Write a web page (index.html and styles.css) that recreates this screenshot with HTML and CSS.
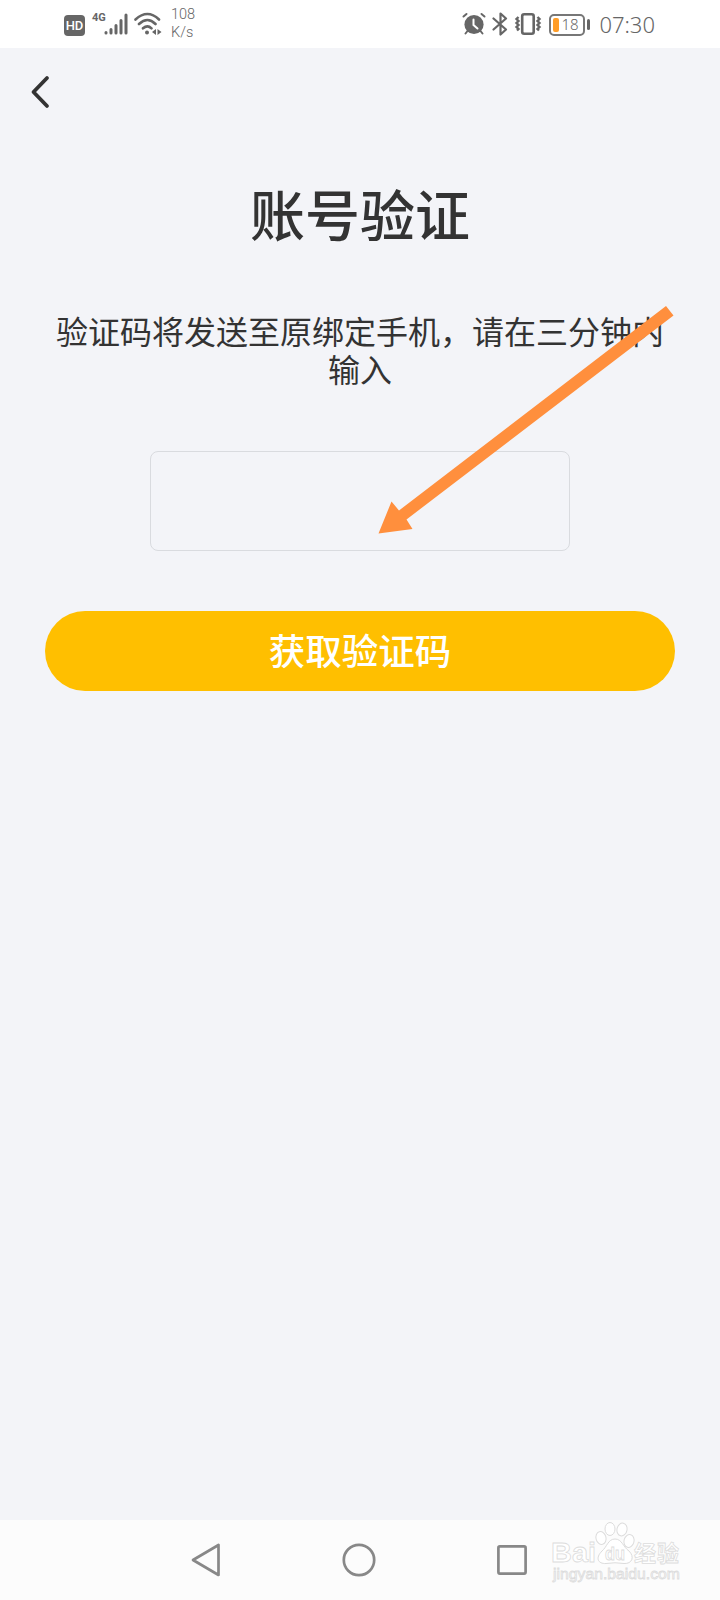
FILE: index.html
```html
<!DOCTYPE html>
<html lang="zh-CN">
<head>
  <meta charset="UTF-8">
  <title>账号验证</title>
  <link rel="stylesheet" href="styles.css">
</head>
<body>
  <div class="status">
    <div class="status-left">
      <span class="hd">HD</span>
      <span class="net">4G</span>
      <svg class="signal" width="24" height="24" viewBox="0 0 24 24" fill="none" stroke="#666" stroke-width="3" stroke-linecap="round">
        <path d="M2 20.5v.5M7 17.5v3.5M12 13.5v7.5M17 8.5v12.5M22 3v18"/>
      </svg>
      <svg class="wifi" width="28" height="24" viewBox="0 0 28 24" fill="none" stroke="#666" stroke-width="2.6" stroke-linecap="round">
        <path d="M1.5 7.5Q13.5-3.5 25 7.5M5 12Q13.5 4 21.5 12M9 16.3Q13.5 12.3 17.5 16.3"/>
        <circle cx="13" cy="20.6" r="2" fill="#666" stroke="none"/>
        <path d="M22 17v6l-4-3zM23.5 17v6l4-3z" fill="#666" stroke="none"/>
      </svg>
      <div class="speed">108<br>K/s</div>
    </div>
    <div class="status-right">
      <svg class="alarm" width="24" height="24" viewBox="0 0 24 24" fill="none" stroke="#666" stroke-linecap="round">
        <circle cx="12" cy="12.5" r="9.6" fill="#666" stroke="none"/>
        <path d="M1.5 4.5L4.5 2M22.5 4.5L19.5 2M5.5 19L3.5 21.5M18.5 19L20.5 21.5" stroke-width="2"/>
        <path d="M11.5 7.5v5.5l4 3.5" stroke="#fff" stroke-width="2"/>
      </svg>
      <svg class="bluetooth" width="16" height="24" viewBox="0 0 16 24" fill="none" stroke="#666" stroke-width="2.2" stroke-linejoin="round" stroke-linecap="round">
        <path d="M1.5 6.5L14 17.5L8.500 22.5V1.5L14 6.5L1.5 17.5"/>
      </svg>
      <svg class="vibrate" width="28" height="24" viewBox="0 0 28 24" fill="none" stroke="#666">
        <rect x="8.2" y="2.2" width="11.500" height="19.500" rx="2" stroke-width="2.6"/>
        <path d="M4.500 5L2.500 7l2 2-2 2 2 2-2 2 2 2-1.500 1.500M23.500 5l2 2-2 2 2 2-2 2 2 2-2 2 1.500 1.500" stroke-width="2.4"/>
      </svg>
      <div class="battery"><span class="level"></span><span class="percent">18</span></div>
      <span class="cap"></span>
      <span class="time">07:30</span>
    </div>
  </div>

  <div class="page">
    <svg class="back" width="20" height="34" viewBox="0 0 20 34" fill="none" stroke="#333" stroke-width="3.8" stroke-linecap="round" stroke-linejoin="round">
      <path d="M17 3L3.500 17L17 31"/>
    </svg>
    <h1>账号验证</h1>
    <p class="tip">验证码将发送至原绑定手机，请在三分钟内输入</p>
    <input class="code" type="text">
    <button class="get-code">获取验证码</button>
    <svg class="arrow" width="300" height="234" viewBox="0 0 300 234">
      <path d="M288 0L295.500 9.500L28.500 213.500L34.500 223L0.500 227.500L13.500 195.500L21 204.500Z" fill="#ff8f3d"/>
    </svg>
  </div>

  <div class="nav">
    <svg width="30" height="34" viewBox="0 0 30 34" fill="none" stroke="#888" stroke-width="2.7" stroke-linejoin="round">
      <path d="M27.5 2V32L2 17Z"/>
    </svg>
    <svg width="34" height="34" viewBox="0 0 34 34" fill="none" stroke="#888" stroke-width="2.7">
      <circle cx="17" cy="17" r="15.2"/>
    </svg>
    <svg width="30" height="30" viewBox="0 0 30 30" fill="none" stroke="#888" stroke-width="2.7">
      <rect x="1.4" y="1.4" width="27.2" height="27.2" rx="1.5"/>
    </svg>
    <svg class="watermark" width="140" height="70" viewBox="0 0 140 70" fill="#fff" stroke="#dcdcdc">
      <text x="1" y="42" class="wm-logo" textLength="45" lengthAdjust="spacingAndGlyphs">Bai</text>
      <path d="M65 19C58 19 57 27 52 31C45 38 48 44 56 43.5Q65 42 74 43.5C82 44 85 37 79 31C73 27 72 19 65 19Z"/>
      <ellipse cx="51" cy="18" rx="5" ry="6.5" transform="rotate(-15 51 18)"/>
      <ellipse cx="60" cy="9" rx="5" ry="6.5"/>
      <ellipse cx="72" cy="9.5" rx="5" ry="6.5" transform="rotate(12 72 9.5)"/>
      <ellipse cx="79" cy="21" rx="5" ry="6.5" transform="rotate(15 79 21)"/>
      <text x="55" y="40" class="wm-du" textLength="20" lengthAdjust="spacingAndGlyphs">du</text>
      <text x="84" y="41" class="wm-cn" textLength="45">经验</text>
      <text x="3" y="59" class="wm-url" textLength="127" lengthAdjust="spacingAndGlyphs">jingyan.baidu.com</text>
    </svg>
  </div>
</body>
</html>
```
FILE: styles.css
```css
* {
  box-sizing: border-box;
}
body {
  margin: 0;
  height: 1600px;
  display: flex;
  flex-direction: column;
  background-color: #f3f4f8;
  color: #333;
  font-family: KaiTi, STKaiti, "Noto Sans CJK SC", sans-serif;
}
svg {
  display: block;
  flex: none;
}
.status {
  height: 48px;
  padding: 0 65px 0 64px;
  display: flex;
  justify-content: space-between;
  background-color: #fff;
  color: #666;
  font-family: Roboto, sans-serif;
}
.status-left, .status-right {
  display: flex;
  align-items: center;
}
.hd {
  width: 21px;
  height: 21px;
  margin-top: 2px;
  border-radius: 4px;
  background-color: #666;
  color: #fff;
  font-size: 13px;
  font-weight: 500;
  line-height: 22px;
  text-align: center;
}
.net {
  width: 13px;
  height: 12px;
  margin: -13px 0 0 7px;
  font-size: 11px;
  font-weight: bold;
  line-height: 12px;
}
.signal {
  margin-left: -1px;
}
.wifi {
  margin-left: 6px;
}
.speed {
  margin: -1px 0 0 9px;
  font-size: 14.5px;
  font-weight: 300;
  line-height: 18px;
}
.bluetooth {
  margin-left: 6px;
}
.vibrate {
  margin-left: 6px;
}
.battery {
  width: 36px;
  height: 22px;
  margin: 1px 0 0 7px;
  padding: 2px;
  display: flex;
  align-items: center;
  border: 2px solid #777;
  border-radius: 5px;
}
.level {
  width: 6px;
  height: 14px;
  border-radius: 2px;
  background-color: #ff9d28;
}
.percent {
  margin: -1px 0 0 2px;
  font-family: "Noto Sans", sans-serif;
  font-size: 15px;
  font-weight: 300;
  line-height: 14px;
}
.cap {
  width: 3px;
  height: 11px;
  margin: 1px 9px 0 2px;
  border-radius: 2px;
  background-color: #666;
}
.time {
  font-family: "Noto Sans", sans-serif;
  font-size: 22px;
  font-weight: 300;
  line-height: 30px;
  margin-top: 0;
}
.page {
  position: relative;
  flex: 1;
  display: flex;
  flex-direction: column;
  align-items: center;
}
.back {
  align-self: flex-start;
  margin: 27px 0 0 30px;
}
h1 {
  margin: 63px 0 0;
  font-size: 55px;
  font-weight: 500;
  line-height: 80px;
}
.tip {
  width: 620px;
  margin: 59px 0 0;
  font-size: 32px;
  line-height: 38px;
  text-align: center;
}
.code {
  width: 420px;
  height: 100px;
  margin-top: 64px;
  border: 1px solid #d9dbdf;
  border-radius: 8px;
  background-color: transparent;
}
.get-code {
  width: 630px;
  height: 80px;
  margin-top: 60px;
  padding: 0 0 4px;
  border: none;
  border-radius: 40px;
  background-color: #ffbf00;
  color: #fff;
  font-family: inherit;
  font-size: 36.5px;
  font-weight: 500;
}
.arrow {
  position: absolute;
  left: 378px;
  top: 258px;
}
.nav {
  position: relative;
  height: 80px;
  padding: 0 193px 0 191px;
  display: flex;
  align-items: center;
  justify-content: space-between;
  background-color: #fcfcfc;
}
.watermark {
  position: absolute;
  left: 550px;
  top: 0;
}
.watermark text {
  stroke-width: 0.8px;
}
.wm-logo {
  font: bold 28px "Liberation Sans", sans-serif;
}
.wm-du {
  font: bold 18px "Liberation Sans", sans-serif;
}
.wm-cn {
  font: bold 22px "Noto Sans CJK SC", sans-serif;
}
.wm-url {
  font: 15px "Liberation Sans", sans-serif;
}
```
